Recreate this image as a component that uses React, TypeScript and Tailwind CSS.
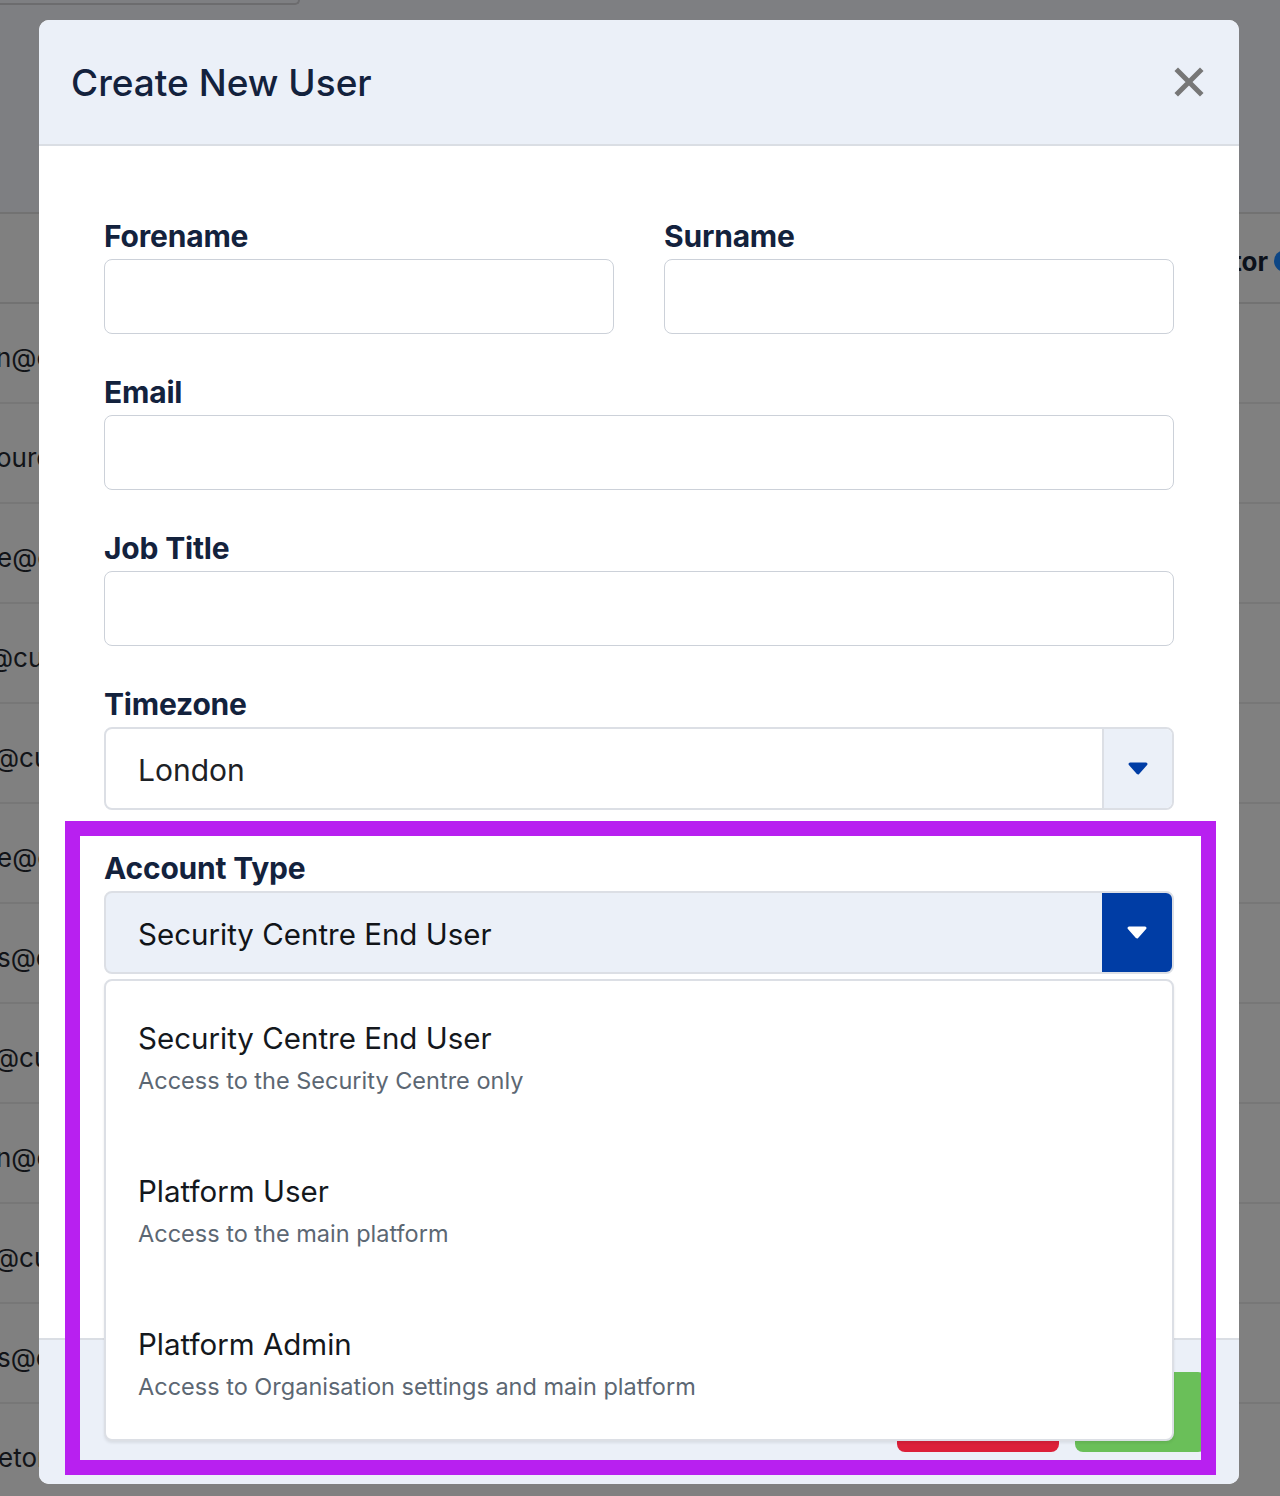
import React from 'react';

const rows = [
  { text: 'n@cultureai.com', ml: '-ml-[4px]' },
  { text: 'ourcompany.com', ml: '-ml-[4px]' },
  { text: 'e@cultureai.com', ml: '-ml-[3px]' },
  { text: '@cultureai.com', ml: '-ml-[12px]' },
  { text: '@cultureai.com', ml: '-ml-[6px]' },
  { text: 'e@cultureai.com', ml: '-ml-[3px]' },
  { text: 's@cultureai.com', ml: '-ml-[3px]' },
  { text: '@cultureai.com', ml: '-ml-[6px]' },
  { text: 'n@cultureai.com', ml: '-ml-[4px]' },
  { text: '@cultureai.com', ml: '-ml-[6px]' },
  { text: 's@cultureai.com', ml: '-ml-[3px]' },
  { text: 'etonline.co.uk', ml: '-ml-[2px]' },
];

const options = [
  { title: 'Security Centre End User', desc: 'Access to the Security Centre only' },
  { title: 'Platform User', desc: 'Access to the main platform' },
  { title: 'Platform Admin', desc: 'Access to Organisation settings and main platform' },
];

const Caret = ({ color }: { color: string }) => (
  <svg width="22" height="14" viewBox="0 0 22 14">
    <path
      d="M3 2 H19 L11 11 Z"
      fill={color}
      stroke={color}
      strokeWidth="3"
      strokeLinejoin="round"
    />
  </svg>
);

const Label = ({ children }: { children: React.ReactNode }) => (
  <div className="text-[30px] leading-[34px] font-bold text-[#13223d] mb-[6px] tracking-[-0.2px]">{children}</div>
);

const Field = ({ label, half }: { label: string; half?: boolean }) => (
  <div className={half ? 'flex-1' : ''}>
    <Label>{label}</Label>
    <div className="h-[75px] rounded-[8px] border border-[#ccd1d9] bg-white" />
  </div>
);

const App: React.FC = () => {
  return (
    <div className="relative w-[1280px] h-[1496px] overflow-hidden bg-[#808080] font-['Inter',sans-serif]">
      {/* dimmed page behind the modal */}
      <div className="flex flex-col">
        <div className="h-[214px] bg-[#7e7f82] border-b-2 border-[#727272]">
          <div className="w-[300px] h-[5px] border-b-2 border-r-2 border-[#6c6c6e] rounded-br-[10px]" />
        </div>
        <div className="h-[90px] border-b-2 border-[#727272] flex items-center justify-end pt-[6px]">
          <span className="text-[26px] font-bold text-[#0c111b] whitespace-nowrap">Administrator</span>
          <span className="ml-[6px] -mr-[16px] w-[22px] h-[22px] rounded-full bg-[#0d4685]" />
        </div>
        {rows.map((r, i) => (
          <div key={i} className="h-[100px] border-b-2 border-[#777777] flex items-center pt-[8px] overflow-hidden">
            <span className={`${r.ml} text-[26px] text-[#121418] whitespace-nowrap`}>{r.text}</span>
          </div>
        ))}
      </div>

      {/* modal */}
      <div className="absolute inset-0 pt-[20px] pl-[39px]">
        <div className="w-[1200px] h-[1464px] rounded-[10px] bg-white flex flex-col">
          <div className="h-[126px] shrink-0 rounded-t-[10px] bg-[#ebf0f8] border-b-2 border-[#dadee4] flex items-center justify-between pl-[32px] pr-[35px]">
            <h1 className="text-[37px] font-medium text-[#13223d] pt-[2px]">Create New User</h1>
            <svg width="30" height="30" viewBox="0 0 30 30">
              <path d="M4 4 L26 26 M26 4 L4 26" stroke="#777777" strokeWidth="5" strokeLinecap="square" />
            </svg>
          </div>

          <div className="relative flex-1 px-[65px] pt-[73px]">
            <div className="flex gap-[50px] mb-[41px]">
              <Field label="Forename" half />
              <Field label="Surname" half />
            </div>
            <div className="mb-[41px]">
              <Field label="Email" />
            </div>
            <div className="mb-[41px]">
              <Field label="Job Title" />
            </div>

            <div className="mb-[41px]">
              <Label>Timezone</Label>
              <div className="h-[83px] rounded-[8px] border-2 border-[#dcdfe5] bg-white flex overflow-hidden">
                <div className="flex-1 flex items-center pl-[32px] pt-[3px] text-[30px] text-[#1d2126]">London</div>
                <div className="w-[70px] border-l-2 border-[#dcdfe5] bg-[#ebf0f8] flex items-center justify-center">
                  <Caret color="#003da5" />
                </div>
              </div>
            </div>

            <div className="relative">
              <Label>Account Type</Label>
              <div className="h-[83px] rounded-[8px] border-2 border-[#dcdfe5] bg-[#ebf0f8] flex overflow-hidden">
                <div className="flex-1 flex items-center pl-[32px] pt-[3px] text-[29.5px] text-[#111418]">Security Centre End User</div>
                <div className="w-[70px] bg-[#003da5] flex items-center justify-center">
                  <Caret color="#ffffff" />
                </div>
              </div>

              {/* open dropdown menu */}
              <div className="absolute left-0 right-0 top-[128px] z-20 h-[462px] overflow-hidden rounded-[8px] border-2 border-[#dcdfe5] bg-white shadow-[0_2px_3px_rgba(0,0,0,0.08)]">
                {options.map((o) => (
                  <div key={o.title} className="pl-[32px] pt-[39px] pb-[36px]">
                    <div className="text-[29.5px] leading-[36px] text-[#14181d]">{o.title}</div>
                    <div className="mt-[8px] text-[23.5px] leading-[34px] text-[#5c6773]">{o.desc}</div>
                  </div>
                ))}
              </div>
            </div>
          </div>

          <div className="h-[146px] shrink-0 rounded-b-[10px] bg-[#ebf0f8] border-t-2 border-[#dadee4] flex items-start justify-end gap-[16px] pt-[32px] pr-[33px]">
            <button aria-label="Cancel" className="w-[162px] h-[80px] rounded-[8px] bg-[#dc2039]" />
            <button aria-label="Create" className="w-[131px] h-[80px] rounded-[8px] bg-[#6abf59]" />
          </div>
        </div>
      </div>

      {/* highlight annotation */}
      <div className="absolute left-[65px] top-[821px] w-[1151px] h-[654px] border-[15px] border-[#b820f0] pointer-events-none z-30" />
    </div>
  );
};

export default App;
